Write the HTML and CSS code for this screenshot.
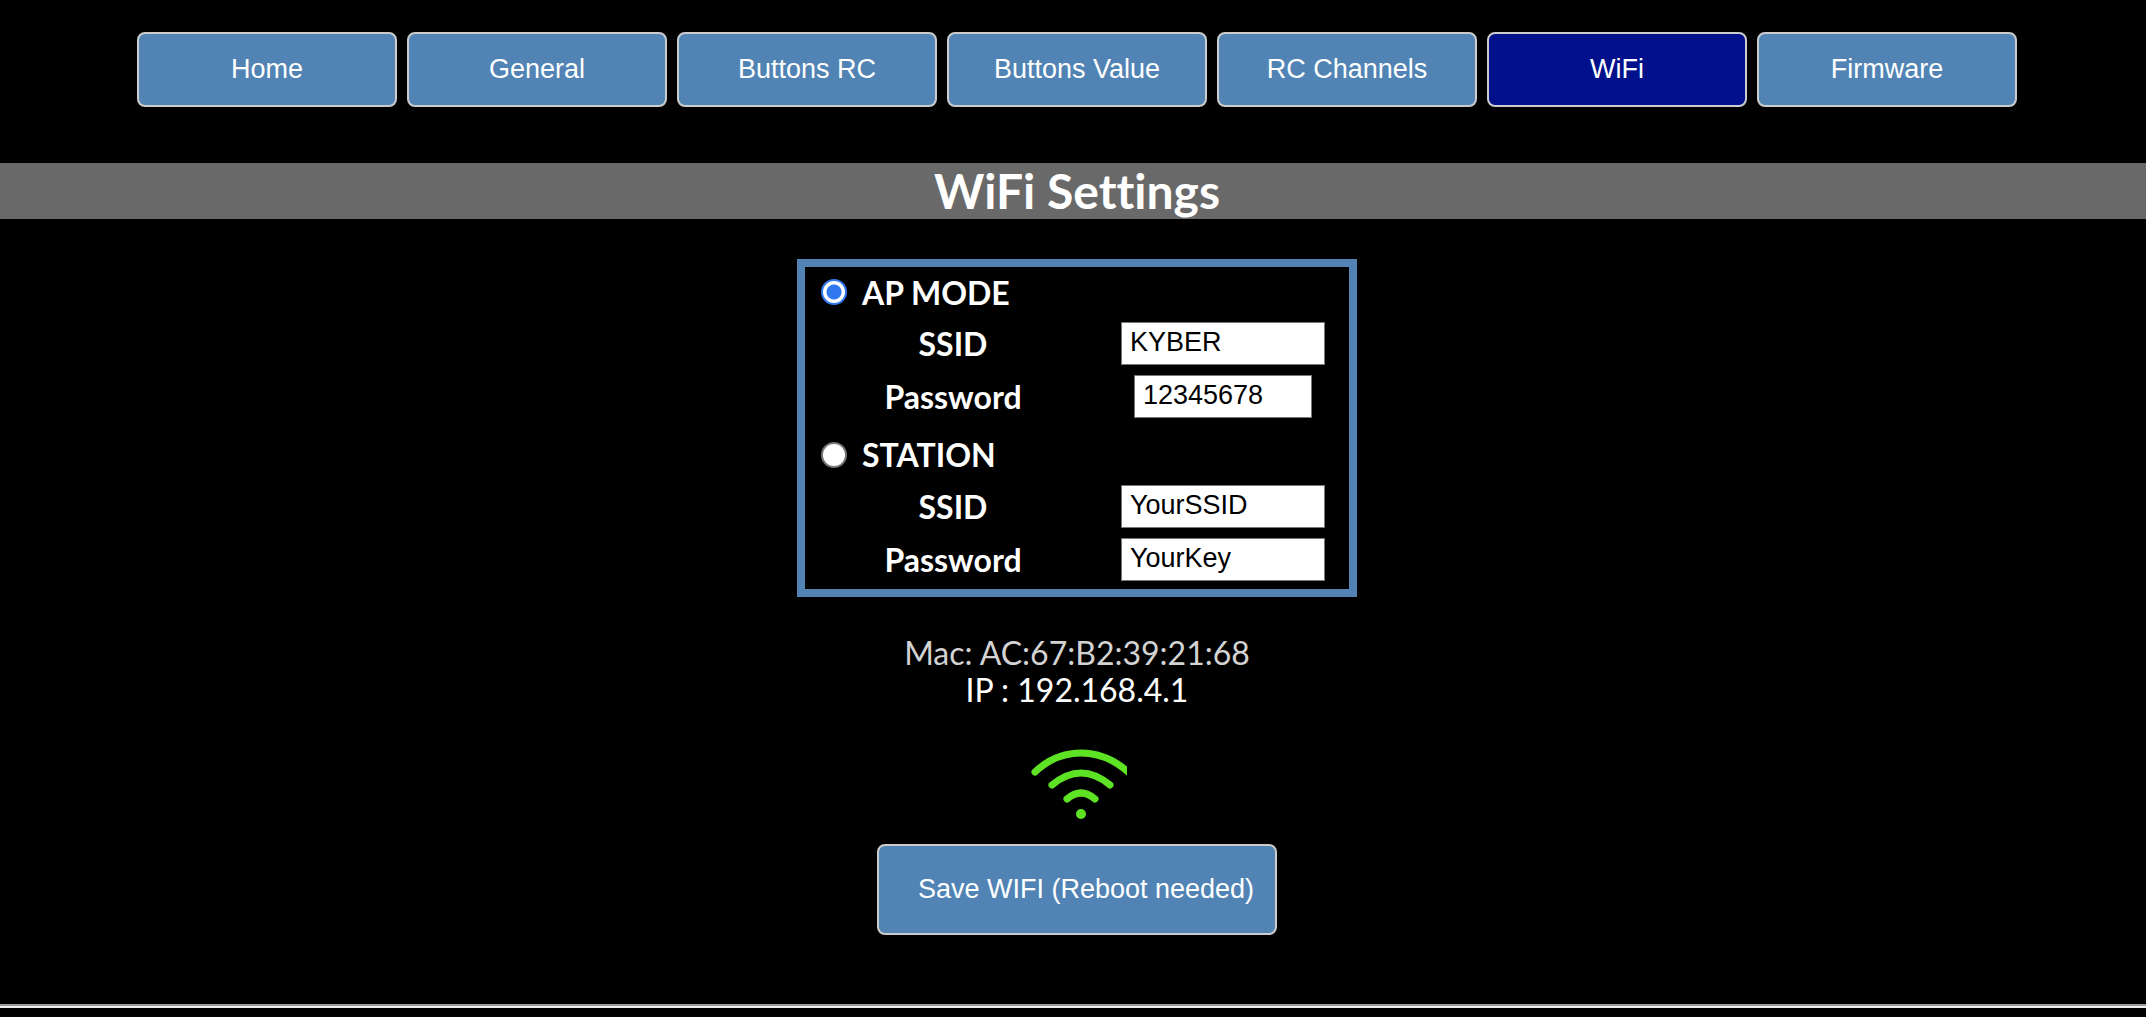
FILE: index.html
```html
<!DOCTYPE html>
<html lang="en">
<head>
<meta charset="utf-8">
<title>WiFi Settings</title>
<link rel="stylesheet" href="styles.css">
</head>
<body>
<nav class="tabs">
  <button type="button" class="btn tab">Home</button>
  <button type="button" class="btn tab">General</button>
  <button type="button" class="btn tab">Buttons RC</button>
  <button type="button" class="btn tab">Buttons Value</button>
  <button type="button" class="btn tab">RC Channels</button>
  <button type="button" class="btn tab active">WiFi</button>
  <button type="button" class="btn tab">Firmware</button>
</nav>
<h1 class="title">WiFi Settings</h1>
<form class="settings">
  <div class="panel">
    <div class="mode">
      <input class="radio" type="radio" name="mode" id="mode-ap" checked>
      <label for="mode-ap">AP MODE</label>
    </div>
    <div class="field">
      <label for="ap-ssid">SSID</label>
      <input class="text" type="text" id="ap-ssid" value="KYBER">
    </div>
    <div class="field">
      <label for="ap-pass">Password</label>
      <input class="text short" type="text" id="ap-pass" value="12345678">
    </div>
    <div class="mode station">
      <input class="radio" type="radio" name="mode" id="mode-sta">
      <label for="mode-sta">STATION</label>
    </div>
    <div class="field">
      <label for="sta-ssid">SSID</label>
      <input class="text" type="text" id="sta-ssid" value="YourSSID">
    </div>
    <div class="field">
      <label for="sta-pass">Password</label>
      <input class="text" type="text" id="sta-pass" value="YourKey">
    </div>
  </div>
  <div class="info">
    <div class="mac">Mac: AC:67:B2:39:21:68</div>
    <div>IP : 192.168.4.1</div>
  </div>
  <svg class="signal" width="100" height="80" viewBox="0 0 100 80" aria-hidden="true">
    <g fill="none" stroke="#5ee324" stroke-width="7" stroke-linecap="round">
      <path d="M8 27Q28 8 54 8T101 27"/>
      <path d="M25 40Q54 16 83 40"/>
      <path d="M40 54Q54 42 68 54"/>
    </g>
    <circle cx="54" cy="69" r="5" fill="#5ee324"/>
  </svg>
  <button type="submit" class="btn save">Save WIFI (Reboot needed)</button>
</form>
<hr class="rule">
</body>
</html>
```
FILE: styles.css
```css
* {
  box-sizing: border-box;
}

body {
  margin: 0;
  background: #000;
  color: #fff;
  font-family: "Trebuchet MS", Lato, sans-serif;
  font-size: 32px;
  font-variant-ligatures: none;
}

.btn {
  border: 2px solid #ccc;
  border-radius: 8px;
  background: #5184b4;
  color: #fff;
  font-family: Arial, "Liberation Sans", sans-serif;
  font-size: 27px;
  cursor: pointer;
}

.tabs {
  display: flex;
  justify-content: center;
  gap: 10px;
  padding: 32px 0 0 8px;
}

.tab {
  flex: 0 1 260px;
  height: 75px;
  padding: 0;
}

.tab.active {
  background: #00118b;
}

.title {
  margin: 56px 0 40px;
  padding-left: 8px;
  background: #696969;
  font-size: 48px;
  line-height: 56px;
  text-align: center;
}

.settings {
  display: flex;
  flex-direction: column;
  align-items: center;
  padding-left: 8px;
}

.panel {
  width: 560px;
  max-width: 100%;
  padding-bottom: 3px;
  border: 8px solid #5184b4;
  font-weight: bold;
}

.mode {
  display: flex;
  align-items: center;
  gap: 15px;
  height: 50px;
  padding-left: 16px;
}

.station {
  height: 57px;
  padding-top: 6px;
}

.radio {
  appearance: none;
  width: 26px;
  height: 26px;
  margin: 0;
  border: 2px solid #767676;
  border-radius: 50%;
  background: #fff;
}

.radio:checked {
  border-color: #2f78f0;
  background: radial-gradient(circle, #2f78f0 7px, #fff 8px);
}

.field {
  display: grid;
  grid-template-columns: 296fr 236fr;
  gap: 4px;
  align-items: center;
  justify-items: center;
  height: 53px;
  padding-right: 8px;
}

.text {
  width: 204px;
  height: 43px;
  padding: 0 8px 2px;
  border: 1px solid #767676;
  background: #fff;
  color: #000;
  font-family: Arial, "Liberation Sans", sans-serif;
  font-size: 27px;
}

.short {
  width: 178px;
}

.info {
  margin-top: 37px;
  line-height: 37px;
  text-align: center;
}

.mac {
  color: #d3d3d3;
}

.signal {
  margin: 37px 0 19px;
}

.save {
  width: 400px;
  height: 91px;
  padding: 0 0 0 18px;
}

.rule {
  height: 4px;
  margin: 69px 0 8px;
  border: 0;
  border-top: 2px solid #9a9a9a;
  background: #eee;
}
```
